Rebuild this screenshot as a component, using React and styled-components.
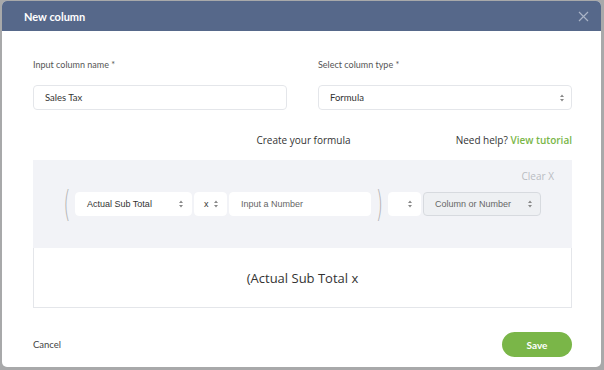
import styled, { createGlobalStyle } from "styled-components";

const Global = createGlobalStyle`
  html, body {
    margin: 0;
    padding: 0;
    background: #a8a9aa;
    font-family: Lato, "Open Sans", sans-serif;
  }
  * { box-sizing: border-box; }
`;

const Page = styled.div`
  width: 604px;
  height: 370px;
  padding: 1px 3px 3px 2px;
`;

const Modal = styled.div`
  width: 599px;
  height: 366px;
  background: #fff;
  border-radius: 5px;
  overflow: hidden;
  display: flex;
  flex-direction: column;
`;

const Header = styled.div`
  height: 30px;
  background: #56688a;
  display: flex;
  align-items: center;
  justify-content: space-between;
  padding: 0 12px 0 22px;
`;

const Title = styled.h2`
  margin: 0;
  color: #fff;
  font-size: 11px;
  font-weight: 700;
`;

const Close = styled.button`
  border: 0;
  background: none;
  padding: 0;
  display: flex;
  color: #a9b3c6;
`;

const Body = styled.div`
  padding: 28px 29px 0 31px;
  display: flex;
  flex-direction: column;
`;

const Fields = styled.div`
  display: grid;
  grid-template-columns: 254px 254px;
  justify-content: space-between;
`;

const Field = styled.div`
  display: flex;
  flex-direction: column;
`;

const Label = styled.label`
  font-size: 9px;
  color: #555;
  margin-bottom: 14px;
  height: 12px;
`;

const Box = styled.div`
  height: 25px;
  border: 1px solid #e4e6ea;
  border-radius: 4px;
  display: flex;
  align-items: center;
  justify-content: space-between;
  padding: 0 6px 0 11px;
  font-size: 9.5px;
  color: #333;
  background: #fff;
`;

const Arrows = () => (
  <svg width="6" height="10" viewBox="0 0 6 10">
    <path d="M1 4 L3 1.5 L5 4 Z M1 6 L3 8.5 L5 6 Z" fill="#888" />
  </svg>
);

const FormulaHead = styled.div`
  margin-top: 23px;
  display: flex;
  justify-content: flex-end;
  align-items: center;
  height: 14px;
  position: relative;
  font-family: "Open Sans", sans-serif;
  font-size: 10px;
  color: #333;
`;

const Center = styled.span`
  position: absolute;
  left: 0;
  right: 0;
  text-align: center;
  padding-left: 2px;
`;

const Help = styled.span`
  position: relative;
`;

const Link = styled.a`
  color: #7ab648;
  font-weight: 600;
`;

const Panel = styled.div`
  margin-top: 13px;
  background: #f2f3f7;
  height: 88px;
  display: flex;
  flex-direction: column;
  padding: 9px 18px 0 0;
`;

const ClearRow = styled.div`
  display: flex;
  justify-content: flex-end;
  font-family: "Open Sans", sans-serif;
  font-size: 10px;
  color: #b9bcc2;
  height: 14px;
`;

const Controls = styled.div`
  margin-top: 9px;
  display: flex;
  align-items: center;
  padding-left: 28px;
  gap: 2px;
`;

const Paren = styled.span`
  font-family: "DejaVu Sans", sans-serif;
  font-weight: 200;
  font-size: 35px;
  color: #b0b0b0;
  line-height: 24px;
  height: 24px;
  display: flex;
  align-items: center;
  justify-content: center;
  transform: scaleX(0.5);
  width: ${(p) => p.$w || 12}px;
`;

const Ctl = styled.div`
  width: ${(p) => p.$w}px;
  height: 24px;
  border-radius: 4px;
  background: ${(p) => (p.$gray ? "#eef0f3" : "#fff")};
  border: 1px solid ${(p) => (p.$gray ? "#d7dadf" : "#fff")};
  display: flex;
  align-items: center;
  justify-content: space-between;
  padding: 0 7px 0 ${(p) => p.$pl || 11}px;
  font-family: "Liberation Sans", Arial, sans-serif;
  font-size: 9px;
  color: ${(p) => (p.$muted ? "#666" : "#333")};
`;

const Result = styled.div`
  height: 60px;
  border: 1px solid #e4e6ea;
  border-top: 0;
  display: flex;
  align-items: center;
  justify-content: center;
  font-family: "Open Sans", sans-serif;
  font-size: 13px;
  color: #333;
  padding: 0;
`;

const Footer = styled.div`
  flex: 1;
  display: flex;
  align-items: center;
  justify-content: space-between;
  padding: 14px 29px 0 31px;
`;

const Cancel = styled.button`
  border: 0;
  background: none;
  padding: 0;
  font-family: Lato, sans-serif;
  font-size: 9.5px;
  color: #444;
`;

const Save = styled.button`
  width: 70px;
  height: 25px;
  border: 0;
  border-radius: 13px;
  background: #7ab648;
  color: #fff;
  font-family: Lato, sans-serif;
  font-weight: 700;
  font-size: 10px;
`;

export default function App() {
  return (
    <Page>
      <Global />
      <Modal>
        <Header>
          <Title>New column</Title>
          <Close>
            <svg width="11" height="11" viewBox="0 0 11 11">
              <path d="M1 1 L10 10 M10 1 L1 10" stroke="currentColor" strokeWidth="1.2" />
            </svg>
          </Close>
        </Header>
        <Body>
          <Fields>
            <Field>
              <Label>Input column name *</Label>
              <Box>Sales Tax</Box>
            </Field>
            <Field>
              <Label>Select column type *</Label>
              <Box>
                Formula
                <Arrows />
              </Box>
            </Field>
          </Fields>
          <FormulaHead>
            <Center>Create your formula</Center>
            <Help>
              Need help? <Link>View tutorial</Link>
            </Help>
          </FormulaHead>
          <Panel>
            <ClearRow>Clear X</ClearRow>
            <Controls>
              <Paren>(</Paren>
              <Ctl $w={117}>
                Actual Sub Total
                <Arrows />
              </Ctl>
              <Ctl $w={33} $pl={9}>
                x
                <Arrows />
              </Ctl>
              <Ctl $w={142} $muted>
                Input a Number
              </Ctl>
              <Paren $w={13}>)</Paren>
              <Ctl $w={33}>
                <span />
                <Arrows />
              </Ctl>
              <Ctl $w={118} $gray $muted>
                Column or Number
                <Arrows />
              </Ctl>
            </Controls>
          </Panel>
          <Result>(Actual Sub Total x</Result>
        </Body>
        <Footer>
          <Cancel>Cancel</Cancel>
          <Save>Save</Save>
        </Footer>
      </Modal>
    </Page>
  );
}
